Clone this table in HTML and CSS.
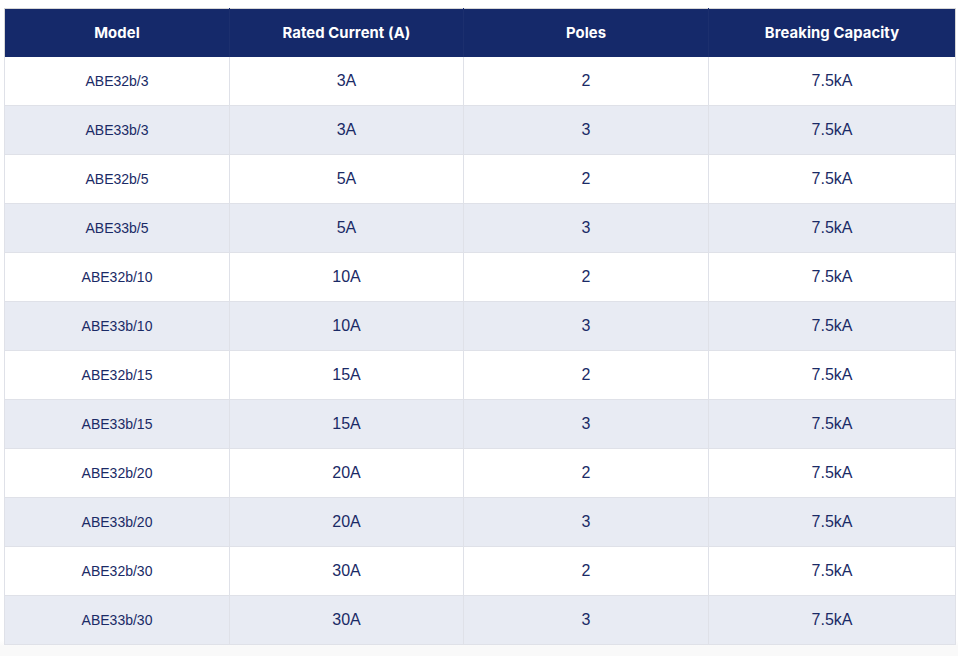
FILE: index.html
```html
<!DOCTYPE html>
<html>
<head>
<meta charset="utf-8">
<link rel="stylesheet" href="styles.css">
</head>
<body>
<div class="wrap">
<table class="spec">
<colgroup>
<col class="c1"><col class="c2"><col class="c3"><col class="c4">
</colgroup>
<thead>
<tr><th>Model</th><th>Rated Current (A)</th><th>Poles</th><th>Breaking Capacity</th></tr>
</thead>
<tbody>
<tr><td class="model">ABE32b/3</td><td>3A</td><td>2</td><td>7.5kA</td></tr>
<tr><td class="model">ABE33b/3</td><td>3A</td><td>3</td><td>7.5kA</td></tr>
<tr><td class="model">ABE32b/5</td><td>5A</td><td>2</td><td>7.5kA</td></tr>
<tr><td class="model">ABE33b/5</td><td>5A</td><td>3</td><td>7.5kA</td></tr>
<tr><td class="model">ABE32b/10</td><td>10A</td><td>2</td><td>7.5kA</td></tr>
<tr><td class="model">ABE33b/10</td><td>10A</td><td>3</td><td>7.5kA</td></tr>
<tr><td class="model">ABE32b/15</td><td>15A</td><td>2</td><td>7.5kA</td></tr>
<tr><td class="model">ABE33b/15</td><td>15A</td><td>3</td><td>7.5kA</td></tr>
<tr><td class="model">ABE32b/20</td><td>20A</td><td>2</td><td>7.5kA</td></tr>
<tr><td class="model">ABE33b/20</td><td>20A</td><td>3</td><td>7.5kA</td></tr>
<tr><td class="model">ABE32b/30</td><td>30A</td><td>2</td><td>7.5kA</td></tr>
<tr><td class="model">ABE33b/30</td><td>30A</td><td>3</td><td>7.5kA</td></tr>
</tbody>
</table>
</div>
</body>
</html>
```
FILE: styles.css
```css
html, body {
  margin: 0;
  padding: 0;
  background: #ffffff;
}
.wrap {
  padding: 8px 3px 0 4px;
  height: 648px;
  background: linear-gradient(#ffffff 0, #ffffff 640px, #f9f9f9 646px);
}
.spec {
  width: 951px;
  border-collapse: collapse;
  table-layout: fixed;
  border: 1px solid #d6d6d6;
  font-family: "Liberation Sans", Arial, sans-serif;
  color: #1a2a66;
  background: #ffffff;
}
.c1 { width: 225px; }
.c2 { width: 234px; }
.c3 { width: 245px; }
.c4 { width: 247px; }
.spec th {
  background: #15296a;
  color: #ffffff;
  font-family: Inter, "Open Sans", sans-serif;
  font-weight: 700;
  font-size: 14.8px;
  letter-spacing: 0.1px;
  height: 48px;
  padding: 0;
  text-align: center;
  border-left: 1px solid #1c2f6e;
  box-sizing: border-box;
}
.spec th:first-child { border-left: none; }
.spec td {
  height: 48px;
  padding: 0;
  text-align: center;
  font-size: 16px;
  border: 1px solid #dfe1e8;
  border-top: none;
}
.spec td.model { font-size: 14px; }
.spec tbody tr:nth-child(even) td { background: #e8ebf3; }
```
